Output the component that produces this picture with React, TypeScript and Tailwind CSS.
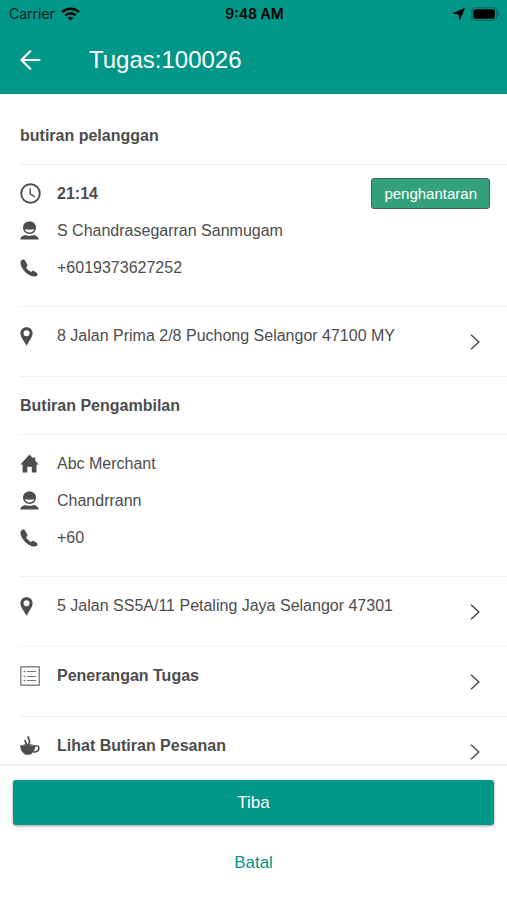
import type { ReactNode } from 'react';

const ClockIcon = () => (
  <svg width="21" height="21" viewBox="0 0 21 21" fill="none" stroke="currentColor">
    <circle cx="10.5" cy="10.5" r="9.300" strokeWidth="1.900" />
    <path d="M10.200 5.200v5.900l4.600 2.600" strokeWidth="1.400" />
  </svg>
);

const PersonIcon = () => (
  <svg width="19" height="19" viewBox="0 0 19 19" fill="currentColor">
    <path d="M9.500.4c3.900 0 6.500 2.500 6.500 6.100 0 3.600-2.700 6.500-6.500 6.500S3 10.100 3 6.500C3 2.900 5.600.4 9.500.4z" />
    <path d="M4.800 8.300c3.100.6 6.300.6 9.400 0-.5 2-2.300 3.100-4.700 3.100S5.300 10.300 4.800 8.300z" fill="#fff" />
    <path d="M.3 18.600c.1-2.300 1.700-3.700 4.700-4.500 2.300 1 6.700 1 9 0 3 .8 4.600 2.200 4.700 4.500z" />
  </svg>
);

const PhoneIcon = () => (
  <svg width="18" height="18" viewBox="0 0 18 18" fill="currentColor">
    <path d="M2.900.6C1.300 1.100.4 2.500.5 4.300c.3 2.800 2 6 4.700 8.700 2.800 2.800 6.200 4.500 9 4.600 1.700 0 2.900-.8 3.300-2.200.2-.6 0-1.100-.5-1.500l-3-2c-.6-.4-1.200-.3-1.700.1l-1.300 1.100c-1-.5-1.900-1.200-2.700-2-.8-.8-1.500-1.700-2-2.700l.9-1.400c.3-.5.4-1 .1-1.600L4.900 1.300C4.400.5 3.700.3 2.900.6z" />
  </svg>
);

const PinIcon = () => (
  <svg width="13" height="19" viewBox="0 0 13 19" fill="currentColor">
    <path
      fillRule="evenodd"
      d="M6.500.3C3 .3.4 2.900.4 6.300c0 1.600.6 3 1.300 4.400L6.500 18.700l4.800-8c.7-1.400 1.300-2.800 1.300-4.400 0-3.400-2.600-6-6.100-6zm0 3a3 3 0 1 1 0 6 3 3 0 0 1 0-6z"
    />
  </svg>
);

const HomeIcon = () => (
  <svg width="19" height="19" viewBox="0 0 19 19" fill="currentColor">
    <path d="M9.500.4 13.300 4.500V3.500h2v3.200l3.400 3.700h-2.200v8.200h-4.700v-5.800H7.300v5.800H2.600v-8.200H.4z" />
  </svg>
);

const ListIcon = () => (
  <svg width="20" height="20" viewBox="0 0 20 20" fill="none" stroke="#777">
    <rect x=".8" y=".8" width="18.400" height="18.400" strokeWidth="1.300" />
    <path d="M7 5.500h9M7 10.500h9M7 14.500h9" strokeWidth="1" />
    <path d="M3.600 5.500h1.600M3.600 10.500h1.600M3.600 14.500h1.600" strokeWidth="1.600" />
  </svg>
);

const CoffeeIcon = () => (
  <svg width="20" height="20" viewBox="0 0 20 20" fill="none" stroke="currentColor">
    <path
      d="M.3 8.800c2.500.8 5 1.200 7.500 1.200s5-.4 7.300-1.200c.4 4-.8 6.700-3.200 8.400-.6 1.100-1.900 1.600-4.100 1.600s-3.600-.5-4.200-1.600C1.300 15.500 0 12.800.3 8.800z"
      fill="currentColor"
      stroke="none"
    />
    <path d="M2 8.900c3.500-1.100 8-1.100 11.500 0-3.500 1.500-8 1.500-11.500 0z" fill="currentColor" stroke="none" />
    <path d="M14.700 10.400c2.600-1.100 4.400-.3 4.300 1.700-.1 2.300-2.500 3.900-5.800 4.100" strokeWidth="1.500" />
    <path d="M8.900.5c-2.100 1.900 1.600 3 .4 6-.2.700-.5 1.300-1 1.800M5.300 3.900c-1 1.500 1.200 2.200.9 4.500" strokeWidth="1.800" />
  </svg>
);

const ChevronIcon = () => (
  <svg width="10" height="16" viewBox="0 0 10 16" fill="none" stroke="currentColor" strokeWidth="1.500">
    <path d="M1 .8 8.800 8 1 15.200" />
  </svg>
);

function StatusBar() {
  return (
    <div className="grid grid-cols-3 items-center h-7 pl-[9px] pr-[7px] font-['Inter',sans-serif] text-sm text-black">
      <div className="flex items-center gap-1.5">
        <span className="opacity-80">Carrier</span>
        <svg width="19" height="14" viewBox="0 0 19 14" fill="none" stroke="currentColor" strokeWidth="2.400">
          <path d="M1.200 5.100c4.700-4.400 11.900-4.400 16.600 0M4.300 8.400c3-2.700 7.400-2.700 10.400 0" />
          <path d="M6.700 10.700c1.700-1.400 3.900-1.400 5.600 0L9.500 13.500z" fill="currentColor" stroke="none" />
        </svg>
      </div>
      <span className="text-center font-semibold">9:48 AM</span>
      <div className="flex items-center justify-end gap-1.5">
        <svg width="12" height="12" viewBox="0 0 12 12" fill="currentColor">
          <path d="M11.300.7 6.700 11.500 6 6 .5 5.300z" stroke="currentColor" strokeLinejoin="round" strokeWidth="1" />
        </svg>
        <svg width="29" height="14" viewBox="0 0 29 14">
          <rect x=".7" y=".7" width="25" height="12.600" rx="3.600" fill="none" stroke="#006b5e" strokeWidth="1.200" />
          <rect x="2.300" y="2.300" width="21.600" height="9.400" rx="2.200" fill="#000" />
          <path d="M27 4.800c1.700.6 1.700 3.800 0 4.400z" fill="#006b5e" />
        </svg>
      </div>
    </div>
  );
}

function SectionTitle({ children }: { children: ReactNode }) {
  return (
    <h2 className="flex items-center h-[58px] ml-5 border-b border-[#f2f2f2] text-base font-bold">
      {children}
    </h2>
  );
}

function InfoRow({ icon, children }: { icon: ReactNode; children: ReactNode }) {
  return (
    <li className="flex items-center h-[37px]">
      <span className="w-[37px] shrink-0">{icon}</span>
      {children}
    </li>
  );
}

function LinkRow({ icon, label, bold }: { icon: ReactNode; label: string; bold?: boolean }) {
  return (
    <button type="button" className="flex h-[70px] ml-5 pr-[27px] border-b border-[#f2f2f2] text-left">
      <span className="flex items-center w-[37px] h-[58px] shrink-0">{icon}</span>
      <span className={`flex items-center h-[58px] flex-1 ${bold ? 'font-bold' : ''}`}>{label}</span>
      <span className="flex items-center h-[69px]">
        <ChevronIcon />
      </span>
    </button>
  );
}

export default function App() {
  return (
    <div className="flex flex-col h-screen bg-white font-['Liberation_Sans',Arial,sans-serif] text-base text-[#4d4d4d] [&_svg]:block">
      <header className="shrink-0 bg-[#009688]">
        <StatusBar />
        <div className="flex items-center h-[66px] pb-0.5 px-5 text-white">
          <button type="button" aria-label="Kembali" className="w-[69px]">
            <svg width="21" height="20" viewBox="0 0 21 20" fill="none" stroke="currentColor" strokeWidth="2.200" strokeLinecap="round" strokeLinejoin="round">
              <path d="M19.500 10H2M10.200 1.300 1.500 10l8.700 8.700" />
            </svg>
          </button>
          <h1 className="text-2xl">Tugas:100026</h1>
        </div>
      </header>

      <main className="flex flex-col flex-1 min-h-0 overflow-hidden pt-[13px] *:shrink-0">
        <SectionTitle>butiran pelanggan</SectionTitle>
        <ul className="ml-5 pt-2.5 pb-5 border-b border-[#f2f2f2]">
          <InfoRow icon={<ClockIcon />}>
            <span className="flex-1 font-bold">21:14</span>
            <span className="mr-[17px] px-3 py-1 rounded-[3px] border border-[#4a5f57] bg-[#33a17c] text-[15px] leading-[21px] text-white">
              penghantaran
            </span>
          </InfoRow>
          <InfoRow icon={<PersonIcon />}>S Chandrasegarran Sanmugam</InfoRow>
          <InfoRow icon={<PhoneIcon />}>+6019373627252</InfoRow>
        </ul>
        <LinkRow icon={<PinIcon />} label="8 Jalan Prima 2/8 Puchong Selangor 47100 MY" />

        <SectionTitle>Butiran Pengambilan</SectionTitle>
        <ul className="ml-5 pt-2.5 pb-5 border-b border-[#f2f2f2]">
          <InfoRow icon={<HomeIcon />}>Abc Merchant</InfoRow>
          <InfoRow icon={<PersonIcon />}>Chandrrann</InfoRow>
          <InfoRow icon={<PhoneIcon />}>+60</InfoRow>
        </ul>
        <LinkRow icon={<PinIcon />} label="5 Jalan SS5A/11 Petaling Jaya Selangor 47301" />
        <LinkRow icon={<ListIcon />} label="Penerangan Tugas" bold />
        <LinkRow icon={<CoffeeIcon />} label="Lihat Butiran Pesanan" bold />
      </main>

      <footer className="flex flex-col shrink-0 px-[13px] pt-3.5 pb-[15px] border-t-2 border-[#f0f0f0] bg-white text-[17px]">
        <button type="button" className="h-[45px] rounded-[3px] bg-[#009688] text-white shadow-[0_1px_3px_rgba(0,0,0,0.4)]">
          Tiba
        </button>
        <button type="button" className="h-11 mt-4 text-[#009688]">
          Batal
        </button>
      </footer>
    </div>
  );
}
